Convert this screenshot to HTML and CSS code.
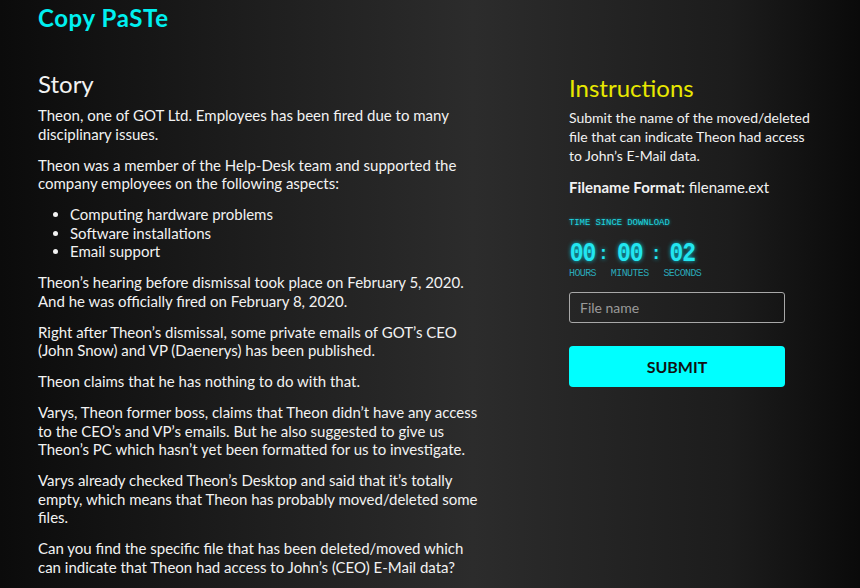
FILE: index.html
```html
<!DOCTYPE html>
<html>
<head>
<meta charset="utf-8">
<link rel="stylesheet" href="styles.css">
</head>
<body>
<header class="topbar"><h1 class="brand">Copy PaSTe</h1></header>
<main class="layout">
  <section class="story">
    <h2 class="story-title">Story</h2>
    <p>Theon, one of GOT Ltd. Employees has been fired due to many disciplinary issues.</p>
    <p>Theon was a member of the Help-Desk team and supported the company employees on the following aspects:</p>
    <ul>
      <li>Computing hardware problems</li>
      <li>Software installations</li>
      <li>Email support</li>
    </ul>
    <p>Theon’s hearing before dismissal took place on February 5, 2020. And he was officially fired on February 8, 2020.</p>
    <p>Right after Theon’s dismissal, some private emails of GOT’s CEO (John Snow) and VP (Daenerys) has been published.</p>
    <p>Theon claims that he has nothing to do with that.</p>
    <p>Varys, Theon former boss, claims that Theon didn’t have any access to the CEO’s and VP’s emails. But he also suggested to give us Theon’s PC which hasn’t yet been formatted for us to investigate.</p>
    <p>Varys already checked Theon’s Desktop and said that it’s totally empty, which means that Theon has probably moved/deleted some files.</p>
    <p>Can you find the specific file that has been deleted/moved which can indicate that Theon had access to John’s (CEO) E-Mail data?</p>
  </section>
  <aside class="panel">
    <h2 class="panel-title">Instructions</h2>
    <p class="panel-text">Submit the name of the moved/deleted file that can indicate Theon had access to John’s E-Mail data.</p>
    <p><strong>Filename Format:</strong> filename.ext</p>
    <div class="timer">
      <div class="timer-caption">TIME SINCE DOWNLOAD</div>
      <div class="timer-row">
        <div class="unit"><span class="digits">00</span><span class="unit-label">HOURS</span></div>
        <span class="colon">:</span>
        <div class="unit"><span class="digits">00</span><span class="unit-label">MINUTES</span></div>
        <span class="colon">:</span>
        <div class="unit"><span class="digits">02</span><span class="unit-label">SECONDS</span></div>
      </div>
    </div>
    <input class="file-input" type="text" placeholder="File name">
    <button class="submit">SUBMIT</button>
  </aside>
</main>
</body>
</html>
```
FILE: styles.css
```css
html, body {
  margin: 0;
  height: 100%;
}
body {
  background: linear-gradient(90deg, #0b0b0b 0%, #1e1e1e 30%, #2c2c2c 55%, #1c1c1c 85%, #0a0a0a 100%);
  color: #f2f2f2;
  font-family: "Lato", "Noto Sans", sans-serif;
  font-size: 15px;
  line-height: 18.5px;
  overflow: hidden;
}
.topbar {
  padding: 3px 38px 0;
  height: 61px;
}
.brand {
  margin: 0;
  color: #00f0f0;
  font-size: 24px;
  font-weight: 700;
  letter-spacing: 0.6px;
  line-height: 30px;
}
.layout {
  display: flex;
  padding-left: 38px;
}
.story {
  width: 448px;
}
.story-title {
  margin: 5px 0 7px;
  font-size: 24px;
  font-weight: 400;
  line-height: 30px;
}
p {
  margin: 0 0 12.5px;
}
ul {
  margin: 0 0 12.5px;
  padding-left: 32px;
}
.panel {
  margin-left: 83px;
  width: 242px;
  padding-top: 9px;
}
.panel-title {
  margin: 0 0 5px;
  color: #e8e800;
  font-size: 24px;
  font-weight: 400;
  line-height: 30px;
}
.panel-text {
  font-size: 14px;
  line-height: 19px;
}
.panel strong {
  font-weight: 700;
}
.timer {
  margin-top: 21px;
  color: #1fd5df;
  font-family: "Liberation Mono", monospace;
}
.timer-caption {
  font-size: 9px;
  line-height: 12px;
  letter-spacing: -0.1px;
  text-shadow: 0 0 3px rgba(0, 230, 255, 0.6);
}
.timer-row {
  display: flex;
  align-items: flex-start;
  margin-top: 15px;
}
.unit {
  display: flex;
  flex-direction: column;
  align-items: center;
}
.digits {
  display: block;
  color: #22e6f0;
  font-size: 23px;
  font-weight: 700;
  line-height: 20px;
  letter-spacing: -1px;
  transform: scaleY(1.2);
  text-shadow: 0 0 4px rgba(0, 230, 255, 0.8);
}
.colon {
  color: #22e6f0;
  font-size: 18px;
  font-weight: 700;
  line-height: 20px;
  margin: 0 2px;
  text-shadow: 0 0 4px rgba(0, 230, 255, 0.8);
}
.unit-label {
  margin-top: 5px;
  color: #2aa8b8;
  font-size: 10px;
  line-height: 10px;
  letter-spacing: -0.6px;
}
.file-input {
  display: block;
  box-sizing: border-box;
  width: 216px;
  height: 31px;
  margin-top: 13px;
  padding: 0 10px;
  background: transparent;
  border: 1px solid #a8a8a8;
  border-radius: 3px;
  color: #ddd;
  font-family: "Lato", "Noto Sans", sans-serif;
  font-size: 14px;
}
.file-input::placeholder {
  color: #9a9a9a;
}
.submit {
  display: block;
  width: 216px;
  height: 41px;
  margin-top: 23px;
  border: 0;
  border-radius: 4px;
  background: #00ffff;
  color: #111;
  font-family: "Lato", "Noto Sans", sans-serif;
  font-size: 16px;
  font-weight: 700;
}
```
